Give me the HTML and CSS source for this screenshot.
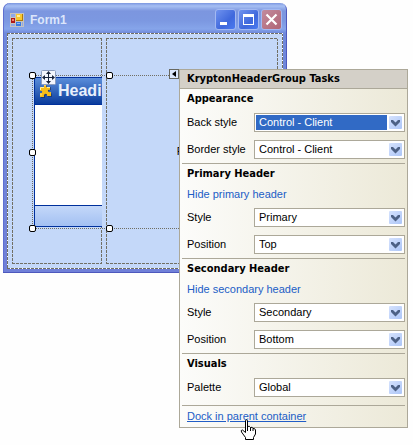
FILE: index.html
```
<!DOCTYPE html>
<html lang="en">
<head>
<meta charset="utf-8">
<title>Form1</title>
<link rel="stylesheet" href="styles.css">
</head>
<body>
<main class="desktop">
  <section class="window">
    <header class="titlebar">
      <svg class="app-icon" viewBox="0 0 14 14" shape-rendering="crispEdges">
        <rect x="0" y="0" width="14" height="14" fill="#c5c3c0"/>
        <rect x="1" y="1" width="4" height="3" fill="#8fa8e8"/>
        <rect x="6" y="1" width="7" height="7" fill="#b07a08"/>
        <rect x="6" y="1" width="6" height="6" fill="#f8c830"/>
        <rect x="7" y="2" width="3" height="2" fill="#fff0a0"/>
        <rect x="1" y="5" width="4" height="5" fill="#b01818"/>
        <rect x="2" y="6" width="2" height="2" fill="#f08070"/>
        <rect x="6" y="9" width="5" height="4" fill="#3878e0"/>
        <rect x="7" y="10" width="3" height="1" fill="#90b8f8"/>
        <rect x="1" y="11" width="4" height="2" fill="#8fa8e8"/>
        <rect x="12" y="9" width="1" height="4" fill="#8fa8e8"/>
      </svg>
      <h1 class="caption">Form1</h1>
      <button class="win-btn" aria-label="Minimize"><svg viewBox="0 0 21 21"><path d="M5 13h7v3H5z" fill="#fff"/></svg></button>
      <button class="win-btn" aria-label="Maximize"><svg viewBox="0 0 21 21"><path d="M5 5h11v11H5zM6 8v7h9V8z" fill="#fff" fill-rule="evenodd"/></svg></button>
      <button class="win-btn close" aria-label="Close"><svg viewBox="0 0 21 21"><path d="M5.500 5.500l10 10M15.500 5.500l-10 10" stroke="#fff" stroke-width="2.200" fill="none"/></svg></button>
    </header>
    <div class="client dashed">
      <div class="pane first dashed">
        <div class="group">
          <div class="group-head">
            <svg class="puzzle" viewBox="0 0 14 14"><path d="M2 14V9h1c2 1 2-3 0-2H1V3l4 1c-1-3 3-4 3-1v1l4-1v3c-3 0-3 3 0 3l1 1v3H9c0-3-3-3-3 0v1z" fill="#1b2a4c" opacity=".6"/><path d="M1 13V9c3 1 3-3 0-2V3h4C4 0 8 0 7 3h4v3c-3-1-3 3 1 2v4H8c1-3-4-3-3 1z" fill="#f8bd18"/><path d="M1.500 6V3.500H5M5.500 1.500h1M8 3.500h3M2 9.500v2" stroke="#fff0a0" fill="none"/></svg>
            <span>Headi</span>
          </div>
          <div class="group-body"></div>
          <div class="group-foot"></div>
        </div>
      </div>
      <div class="pane second dashed"><span>P</span></div>
    </div>
  </section>

  <div class="selection">
    <i class="handle h1"></i><i class="handle h2"></i><i class="handle h3"></i><i class="handle h4"></i><i class="handle h5"></i>
    <svg class="move" viewBox="0 0 15 15"><rect x=".5" y=".5" width="14" height="14" rx="1" fill="#f2f6fd" stroke="#8a9cbe"/><path d="M7 3h1v4h4v1H8v4H7V8H3V7h4zM7.500 1L10 4H5zM7.500 14L5 11h5zM1 7.500L4 5v5zM14 7.500L11 10V5z" fill="#17243c"/></svg>
    <button class="glyph" aria-label="Tasks"><svg viewBox="0 0 10 10"><rect x=".5" y=".5" width="9" height="9" fill="#dce8fb" stroke="#686860"/><path d="M7 2v6L3 5z" fill="#000"/></svg></button>
  </div>

  <aside class="tasks">
    <h2 class="tasks-title">KryptonHeaderGroup Tasks</h2>
    <div class="tasks-body">
      <section class="block">
        <h3>Appearance</h3>
        <div class="rows">
          <label for="back">Back style</label>
          <div class="combo active"><select id="back"><option>Control - Client</option></select><svg viewBox="0 0 13 13"><path d="M2 4h2l2.500 2.500L9 4h2v2L6.500 10.500 2 6z"/></svg></div>
          <label for="border">Border style</label>
          <div class="combo"><select id="border"><option>Control - Client</option></select><svg viewBox="0 0 13 13"><path d="M2 4h2l2.500 2.500L9 4h2v2L6.500 10.500 2 6z"/></svg></div>
        </div>
      </section>
      <section class="block">
        <h3>Primary Header</h3>
        <a href="#primary">Hide primary header</a>
        <div class="rows">
          <label for="pstyle">Style</label>
          <div class="combo"><select id="pstyle"><option>Primary</option></select><svg viewBox="0 0 13 13"><path d="M2 4h2l2.500 2.500L9 4h2v2L6.500 10.500 2 6z"/></svg></div>
          <label for="ppos">Position</label>
          <div class="combo"><select id="ppos"><option>Top</option></select><svg viewBox="0 0 13 13"><path d="M2 4h2l2.500 2.500L9 4h2v2L6.500 10.500 2 6z"/></svg></div>
        </div>
      </section>
      <section class="block">
        <h3>Secondary Header</h3>
        <a href="#secondary">Hide secondary header</a>
        <div class="rows">
          <label for="sstyle">Style</label>
          <div class="combo"><select id="sstyle"><option>Secondary</option></select><svg viewBox="0 0 13 13"><path d="M2 4h2l2.500 2.500L9 4h2v2L6.500 10.500 2 6z"/></svg></div>
          <label for="spos">Position</label>
          <div class="combo"><select id="spos"><option>Bottom</option></select><svg viewBox="0 0 13 13"><path d="M2 4h2l2.500 2.500L9 4h2v2L6.500 10.500 2 6z"/></svg></div>
        </div>
      </section>
      <section class="block last">
        <h3>Visuals</h3>
        <div class="rows">
          <label for="palette">Palette</label>
          <div class="combo"><select id="palette"><option>Global</option></select><svg viewBox="0 0 13 13"><path d="M2 4h2l2.500 2.500L9 4h2v2L6.500 10.500 2 6z"/></svg></div>
        </div>
      </section>
      <a class="dock" href="#dock">Dock in parent container</a>
    </div>
  </aside>

  <svg class="cursor" viewBox="0 0 17 22"><path d="M5.500 1.500q1.500-1.500 2 0V7.500q2-1 3 1 2-1 2.500 1 2-.5 2.500 1.500V15l-2 3.500v2h-8v-2L1.500 13q-1-2 1-2l3 2.500z" fill="#fff" stroke="#000"/><path d="M7.500 7v5M10.500 8.500V12M13 9.500V12" stroke="#000" fill="none"/></svg>
</main>
</body>
</html>
```
FILE: styles.css
```
* { box-sizing: border-box; }
body {
  margin: 0;
  background: #fefefe;
  color: #000;
  font: 11px/20px "Liberation Sans", Tahoma, sans-serif;
}
h1, h2, h3 { margin: 0; font-size: inherit; }
h2, h3 { font-family: "DejaVu Sans Condensed", Tahoma, sans-serif; }
.desktop { position: relative; min-height: 100vh; padding: 3px 126px 0 3px; }

.window {
  padding: 0 4px 4px;
  border-radius: 7px 7px 0 0;
  background: linear-gradient(#7b96e0, #a6bff3 3px, #7c96df 8px, #7c98e1 18px, #86a5ea 26px, #7089db 30px, #7080d8);
  box-shadow: inset -1px -1px #4d58bd, inset 1px 0 #5f6fd0;
}
.titlebar { display: flex; align-items: center; gap: 2px; height: 30px; padding: 3px 1px 0 3px; }
.app-icon { width: 14px; height: 14px; }
.caption { flex: 1; margin-left: 4px; color: #dce6fb; font: bold 12px/20px "Liberation Sans", sans-serif; }
.win-btn {
  width: 21px; height: 21px; padding: 0;
  border: 1px solid #a3b9f2; border-radius: 3px;
  background: linear-gradient(135deg, #6f92ee, #3f68dc 60%, #4a7af0);
}
.win-btn svg { display: block; width: 21px; height: 21px; margin: -1px; }
.win-btn.close { background: linear-gradient(135deg, #c28b9d, #b06575); }

.dashed {
  --line: #716f64;
  --gap: #c4d8f9;
  background:
    repeating-linear-gradient(90deg, var(--line) 0 3px, var(--gap) 3px 4px) top / 100% 1px no-repeat,
    repeating-linear-gradient(90deg, var(--line) 0 3px, var(--gap) 3px 4px) bottom / 100% 1px no-repeat,
    repeating-linear-gradient(var(--line) 0 3px, var(--gap) 3px 4px) left / 1px 100% no-repeat,
    repeating-linear-gradient(var(--line) 0 3px, var(--gap) 3px 4px) right / 1px 100% no-repeat,
    #c4d8f9;
}
.client { --gap: #fff; display: flex; gap: 4px; min-height: 236px; padding: 5px; }
.first { flex: 0 0 89px; padding: 39px 0 36px 22px; }
.second { flex: 1; display: grid; place-items: center; }
.second span { width: 30px; }
.group { display: flex; flex-direction: column; height: 150px; border: solid #00309c; border-width: 1px 0 1px 1px; }
.group-head {
  display: flex; align-items: center; gap: 5px; height: 27px; padding-left: 4px; overflow: hidden;
  background: linear-gradient(#5a8edb, #2a5cb4 60%, #0a3c9c);
  border-bottom: 1px solid #00309c;
  color: #e8f0fc; font: bold 16px/20px "Liberation Sans", sans-serif;
}
.puzzle { flex: none; width: 14px; height: 14px; }
.group-body { flex: 1; background: #fff; }
.group-foot { height: 21px; border-top: 1px solid #00309c; background: linear-gradient(#c4d8f9, #a3c0f2); }

.selection {
  position: absolute; left: 32px; top: 75px; width: 148px; height: 154px;
  background:
    repeating-linear-gradient(90deg, #716f64 0 1px, #c4d8f9 1px 2px) top / 100% 1px no-repeat,
    repeating-linear-gradient(90deg, #716f64 0 1px, #c4d8f9 1px 2px) bottom / 100% 1px no-repeat,
    repeating-linear-gradient(#716f64 0 1px, #c4d8f9 1px 2px) left / 1px 100% no-repeat;
}
.handle { position: absolute; width: 7px; height: 7px; border: 1px solid #000; border-radius: 2px; background: #fff; }
.h1 { left: -3px; top: -3px; }
.h2 { left: 74px; top: -3px; }
.h3 { left: -3px; top: 74px; }
.h4 { left: -3px; bottom: -3px; }
.h5 { left: 74px; bottom: -3px; }
.move { position: absolute; left: 9px; top: -5px; width: 15px; height: 15px; }
.glyph { position: absolute; left: 137px; top: -6px; width: 10px; height: 10px; padding: 0; border: 0; background: none; }
.glyph svg { display: block; }

.tasks {
  position: absolute; left: 179px; right: 5px; top: 69px;
  border: 1px solid #aca899;
  background: linear-gradient(90deg, #fcfcfa, #ece9d8);
}
.tasks-title { height: 19px; padding-left: 7px; border-bottom: 1px solid #aca899; background: #d4d0c8; line-height: 18px; }
.tasks-body { padding: 0 2px; }
.block { padding-bottom: 4px; border-bottom: 1px solid #aca899; }
.block.last { padding-bottom: 8px; }
.block h3, .block a, .dock { display: block; height: 20px; padding-left: 5px; }
a { color: #215dc6; text-decoration: none; }
.dock { height: 21px; text-decoration: underline; }
.rows { display: grid; grid-template-columns: 67px 1fr; gap: 8px 0; margin-top: 4px; padding-left: 5px; }
.rows label { line-height: 19px; }
.combo { position: relative; }
.combo select {
  display: block; width: 100%; height: 19px; padding: 0 15px 0 4px;
  appearance: none; border: 1px solid #aca899; border-radius: 0; outline: 0;
  background: #fff; color: #000; font: inherit; line-height: 15px;
}
.combo.active select { background: linear-gradient(#316ac5, #316ac5) 1px 1px / calc(100% - 18px) 15px no-repeat #fff; color: #fff; }
.combo svg {
  position: absolute; right: 3px; top: 3px; width: 13px; height: 13px; pointer-events: none;
  border-radius: 1px; background: linear-gradient(135deg, #d5e2fd, #adc6f7); fill: #4d6185;
}
.cursor { position: absolute; left: 240px; top: 419px; width: 17px; height: 22px; }
```
